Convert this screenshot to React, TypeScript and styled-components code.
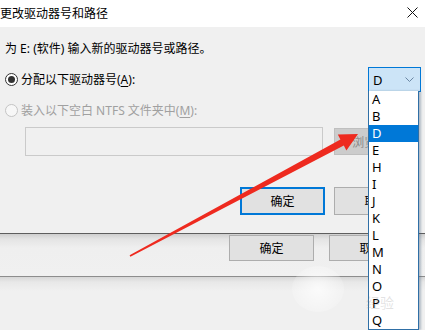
import React from 'react';
import styled, { createGlobalStyle } from 'styled-components';

const Global = createGlobalStyle`
  *, *::before, *::after { box-sizing: border-box; }
  html, body { margin: 0; padding: 0; background: #f0f0f0; }
  body {
    font-family: "Noto Sans", "Noto Sans CJK SC", sans-serif;
    font-size: 12px;
    color: #000;
  }
`;

const Screen = styled.div`
  position: relative;
  width: 425px;
  height: 330px;
  overflow: hidden;
  background: #f0f0f0;
  display: flex;
  flex-direction: column;
`;

const Dialog = styled.div`
  flex: none;
  height: 234px;
  display: flex;
  flex-direction: column;
  background: #f0f0f0;
  border-bottom: 1px solid #5e5e5e;
`;

const TitleBar = styled.div`
  flex: none;
  height: 27px;
  background: #fff;
  display: flex;
  justify-content: space-between;
  align-items: flex-start;
  padding: 4px 7px 0 0;
`;

const Title = styled.span`
  font-family: "Noto Sans CJK SC", sans-serif;
  font-size: 12px;
  line-height: 17px;
`;

const CloseIcon = styled.svg`
  margin-top: 3px;
  width: 11px;
  height: 11px;
`;

const Body = styled.div`
  display: flex;
  flex-direction: column;
  padding: 14px 0 0 5px;
`;

const Instruction = styled.div`
  height: 16px;
  line-height: 16px;
  white-space: nowrap;
`;

const OptionRow = styled.div<{ $top: number; $h: number }>`
  margin-top: ${p => p.$top}px;
  height: ${p => p.$h}px;
  display: flex;
  align-items: center;
  justify-content: space-between;
`;

const RadioLabel = styled.label<{ $disabled?: boolean }>`
  display: flex;
  align-items: center;
  gap: 3px;
  line-height: 16px;
  white-space: nowrap;
  color: ${p => (p.$disabled ? '#a0a0a0' : '#000')};
  u { text-decoration-thickness: 1px; text-underline-offset: 2px; }
`;

const Radio = styled.span<{ $checked?: boolean; $disabled?: boolean }>`
  width: 13px;
  height: 13px;
  border-radius: 50%;
  border: 1px solid ${p => (p.$disabled ? '#c4c4c4' : '#333')};
  background: ${p => (p.$disabled ? '#f7f7f7' : '#fff')};
  display: flex;
  align-items: center;
  justify-content: center;
  &::after {
    content: '';
    display: ${p => (p.$checked ? 'block' : 'none')};
    width: 7px;
    height: 7px;
    border-radius: 50%;
    background: #333;
  }
`;

const Combo = styled.div`
  position: relative;
  width: 53px;
  height: 25px;
  margin-right: 4px;
  background: #cce4f7;
  border: 1px solid #0078d7;
  display: flex;
  align-items: center;
  justify-content: space-between;
  padding: 0 6px 0 4px;
  font-size: 13px;
  line-height: 16px;
`;

const Chevron = styled.svg`
  width: 9px;
  height: 5px;
`;

const DropList = styled.ul`
  position: absolute;
  z-index: 5;
  top: 100%;
  left: -1px;
  width: 51px;
  margin: 0;
  padding: 0;
  list-style: none;
  background: #fff;
  border: 1px solid #2f6fa6;
  border-top: 0;
  box-shadow: 2px 0 2px rgba(60, 90, 120, 0.35);
`;

const DropItem = styled.li<{ $active?: boolean }>`
  height: 17px;
  line-height: 17px;
  padding-left: 3px;
  font-size: 13px;
  background: ${p => (p.$active ? '#0078d7' : 'transparent')};
  color: ${p => (p.$active ? '#fff' : '#000')};
`;

const FieldRow = styled.div`
  margin-top: 8px;
  padding-left: 20px;
  display: flex;
  align-items: flex-start;
  gap: 11px;
`;

const PathField = styled.div`
  width: 298px;
  height: 29px;
  border: 1px solid #cacaca;
  background: #f0f0f0;
`;

const BrowseButton = styled.div`
  margin-top: 1px;
  width: 85px;
  height: 27px;
  background: #cccccc;
  border: 1px solid #bfbfbf;
  color: #8a8a8a;
  display: flex;
  align-items: center;
  justify-content: center;
  white-space: nowrap;
`;

const ButtonRow = styled.div<{ $top: number; $gap: number; $right: number }>`
  margin-top: ${p => p.$top}px;
  padding-right: ${p => p.$right}px;
  display: flex;
  justify-content: flex-end;
  gap: ${p => p.$gap}px;
`;

const Button = styled.div<{ $focused?: boolean; $h: number }>`
  width: 85px;
  height: ${p => p.$h}px;
  background: #e1e1e1;
  border: ${p => (p.$focused ? '2px solid #0078d7' : '1px solid #adadad')};
  display: flex;
  align-items: center;
  justify-content: center;
  font-family: "Noto Sans CJK SC", sans-serif;
  line-height: 16px;
`;

const BackStrip = styled.div`
  flex: none;
  height: 43px;
  background: linear-gradient(#cfcfcf, #e4e4e4 5px, #efefef 14px, #f0f0f0);
  border-bottom: 1px solid #8c8c8c;
`;

const Lower = styled.div`
  flex: 1;
  background: linear-gradient(#d6d6d6, #e8e8e8 5px, #f0f0f0 14px);
`;

const ArrowLayer = styled.svg`
  position: absolute;
  inset: 0;
  z-index: 10;
  pointer-events: none;
`;

const Watermark = styled.div`
  position: absolute;
  z-index: 8;
  left: 292px;
  top: 266px;
  display: flex;
  align-items: center;
  gap: 22px;
  pointer-events: none;
`;

const Blob = styled.div`
  width: 52px;
  height: 46px;
  border-radius: 50%;
  background: radial-gradient(circle, rgba(255,255,255,0.75), rgba(255,255,255,0.2) 70%, rgba(255,255,255,0));
`;

const WaterText = styled.span`
  margin-top: 26px;
  font-family: "Noto Sans CJK SC", sans-serif;
  font-size: 14px;
  color: rgba(140, 140, 140, 0.25);
`;

const letters = ['A', 'B', 'D', 'E', 'H', 'I', 'J', 'K', 'L', 'M', 'N', 'O', 'P', 'Q'];

export default function App() {
  return (
    <>
      <Global />
      <Screen>
        <Dialog>
          <TitleBar>
            <Title>更改驱动器号和路径</Title>
            <CloseIcon viewBox="0 0 11 11">
              <path d="M0.5 0.5 L10.5 10.5 M10.5 0.5 L0.5 10.5" stroke="#111" strokeWidth="1" fill="none" />
            </CloseIcon>
          </TitleBar>
          <Body>
            <Instruction>为 E: (软件) 输入新的驱动器号或路径。</Instruction>
            <OptionRow $top={10} $h={25}>
              <RadioLabel>
                <Radio $checked />
                <span>分配以下驱动器号(<u>A</u>):</span>
              </RadioLabel>
              <Combo>
                <span>D</span>
                <Chevron viewBox="0 0 9 5">
                  <path d="M0.5 0.5 L4.5 4.5 L8.5 0.5" stroke="#6a86a3" strokeWidth="1" fill="none" />
                </Chevron>
                <DropList>
                  {letters.map(l => (
                    <DropItem key={l} $active={l === 'D'}>{l}</DropItem>
                  ))}
                </DropList>
              </Combo>
            </OptionRow>
            <OptionRow $top={10} $h={17}>
              <RadioLabel $disabled>
                <Radio $disabled />
                <span>装入以下空白 NTFS 文件夹中(<u>M</u>):</span>
              </RadioLabel>
            </OptionRow>
            <FieldRow>
              <PathField />
              <BrowseButton>浏览(B)...</BrowseButton>
            </FieldRow>
            <ButtonRow $top={31} $gap={9} $right={6}>
              <Button $focused $h={28}>确定</Button>
              <Button $h={28}>取消</Button>
            </ButtonRow>
          </Body>
        </Dialog>
        <BackStrip>
          <ButtonRow $top={1} $gap={15} $right={11}>
            <Button $h={26}>确定</Button>
            <Button $h={26}>取消</Button>
          </ButtonRow>
        </BackStrip>
        <Lower />
        <Watermark>
          <Blob />
          <WaterText>经验</WaterText>
        </Watermark>
        <ArrowLayer viewBox="0 0 425 330" width="425" height="330">
          <polygon
            points="130.4,256.8 129.6,255.2 340.4,139.4 337.8,134.6 358,134 346.4,150.4 343.8,145.6"
            fill="#ee2a1f"
          />
        </ArrowLayer>
      </Screen>
    </>
  );
}
